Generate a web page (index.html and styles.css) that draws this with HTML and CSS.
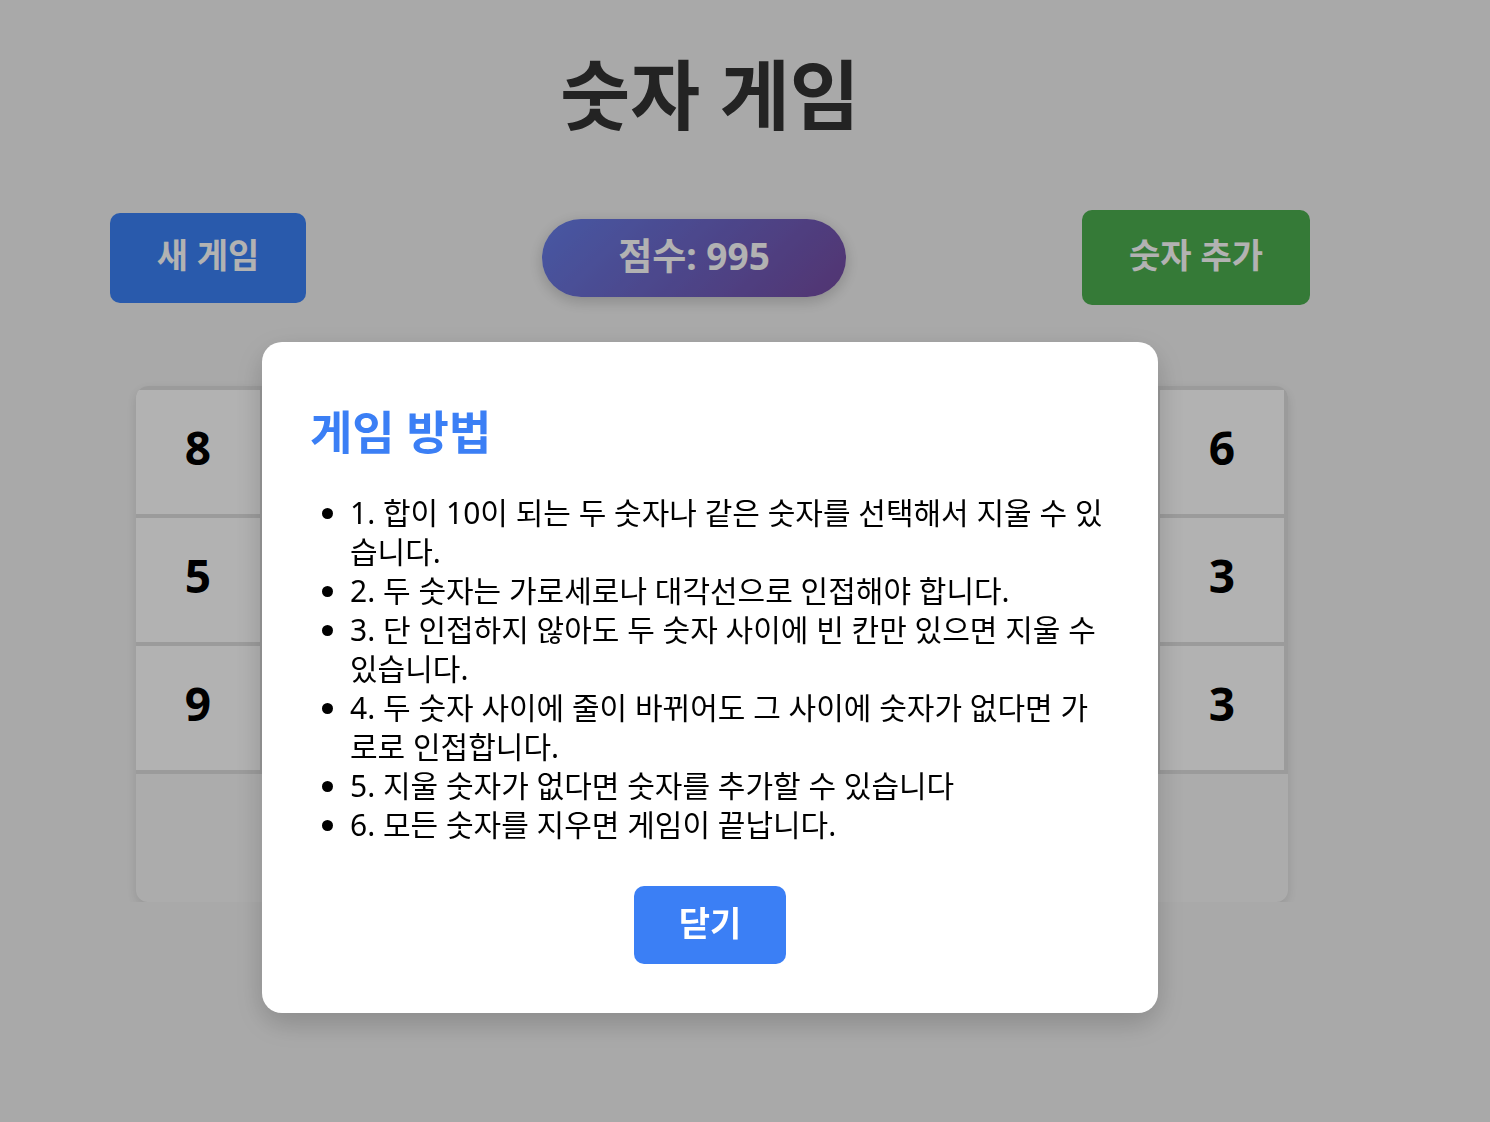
FILE: index.html
```html
<!DOCTYPE html>
<html lang="ko">
<head>
    <meta charset="UTF-8">
    <meta name="viewport" content="width=device-width, initial-scale=1.0">
    <title>숫자 게임</title>
    <link rel="stylesheet" href="styles.css">
</head>
<body>
    <div class="page">
        <h1 class="title">숫자 게임</h1>

        <div class="controls">
            <button class="btn btn-new">새 게임</button>
            <div class="score">점수: 995</div>
            <button class="btn btn-add">숫자 추가</button>
        </div>

        <div class="board">
            <div class="grid">
                <div class="cell">8</div><div class="cell">1</div><div class="cell">4</div><div class="cell">7</div><div class="cell">2</div><div class="cell">9</div><div class="cell">5</div><div class="cell">1</div><div class="cell">6</div>
                <div class="cell">5</div><div class="cell">2</div><div class="cell">7</div><div class="cell">3</div><div class="cell">8</div><div class="cell">4</div><div class="cell">6</div><div class="cell">9</div><div class="cell">3</div>
                <div class="cell">9</div><div class="cell">6</div><div class="cell">1</div><div class="cell">5</div><div class="cell">4</div><div class="cell">2</div><div class="cell">8</div><div class="cell">7</div><div class="cell">3</div>
            </div>
        </div>
    </div>

    <div class="overlay">
        <div class="modal">
            <h2>게임 방법</h2>
            <ul>
                <li>1. 합이 10이 되는 두 숫자나 같은 숫자를 선택해서 지울 수 있습니다.</li>
                <li>2. 두 숫자는 가로세로나 대각선으로 인접해야 합니다.</li>
                <li>3. 단 인접하지 않아도 두 숫자 사이에 빈 칸만 있으면 지울 수 있습니다.</li>
                <li>4. 두 숫자 사이에 줄이 바뀌어도 그 사이에 숫자가 없다면 가로로 인접합니다.</li>
                <li>5. 지울 숫자가 없다면 숫자를 추가할 수 있습니다</li>
                <li>6. 모든 숫자를 지우면 게임이 끝납니다.</li>
            </ul>
            <div class="modal-footer">
                <button class="btn btn-close">닫기</button>
            </div>
        </div>
    </div>
</body>
</html>
```

FILE: styles.css
```css
body {
    margin: 0;
    font-family: "Noto Sans", "Noto Sans CJK KR", sans-serif;
    background-color: #f3f3f3;
    color: #333;
}
.page {
    width: 1420px;
    padding-top: 50px;
}
.title {
    margin: 0;
    font-size: 76px;
    line-height: 90px;
    font-weight: bold;
    text-align: center;
    color: #333;
}
.controls {
    width: 1200px;
    margin: 70px auto 0;
    display: flex;
    justify-content: space-between;
    align-items: center;
}
.btn {
    font-family: "Noto Sans", "Noto Sans CJK KR", sans-serif;
    font-weight: bold;
    color: #fff;
    border: none;
    padding: 0 0 8px;
    cursor: pointer;
}
.btn-new {
    width: 196px;
    height: 90px;
    font-size: 34px;
    background-color: #3b82f6;
    border-radius: 10px;
}
.btn-add {
    width: 228px;
    height: 95px;
    font-size: 34px;
    background-color: #4caf50;
    border-radius: 10px;
}
.score {
    width: 304px;
    height: 78px;
    padding-bottom: 8px;
    box-sizing: border-box;
    border-radius: 39px;
    background: linear-gradient(135deg, #667eea 0%, #764ba2 100%);
    box-shadow: 0 4px 15px rgba(0, 0, 0, 0.2);
    color: #fff;
    font-size: 37px;
    font-weight: bold;
    display: flex;
    justify-content: center;
    align-items: center;
}
.board {
    width: 1152px;
    height: 516px;
    margin: 81px auto 0;
    position: relative;
    left: 2px;
    background-color: #f7f7f7;
    border-radius: 12px;
    box-shadow: 0 4px 12px rgba(0, 0, 0, 0.12);
    overflow: hidden;
}
.grid {
    display: grid;
    grid-template-columns: repeat(9, 124px);
    gap: 4px;
    padding: 4px 4px 4px 0;
    background-color: #dfdfdf;
}
.cell {
    height: 124px;
    padding-bottom: 10px;
    box-sizing: border-box;
    background-color: #fff;
    display: flex;
    justify-content: center;
    align-items: center;
    font-size: 46px;
    font-weight: bold;
    color: #000;
}
.overlay {
    position: fixed;
    top: 0;
    left: 0;
    right: 0;
    bottom: 0;
    padding-right: 70px;
    background-color: rgba(0, 0, 0, 0.3);
    display: flex;
    justify-content: center;
    align-items: flex-start;
}
.modal {
    width: 800px;
    margin-top: 342px;
    padding: 48px 48px 49px;
    background-color: #fff;
    border-radius: 20px;
    box-shadow: 0 10px 30px rgba(0, 0, 0, 0.2);
}
.modal h2 {
    margin: 8px 0 29px;
    font-size: 46px;
    line-height: 66px;
    color: #3b7ff5;
}
.modal ul {
    margin: 0;
    padding-left: 40px;
    font-size: 30px;
    line-height: 39px;
    color: #000;
}
.modal-footer {
    margin-top: 42px;
    text-align: center;
}
.btn-close {
    width: 152px;
    height: 78px;
    font-size: 34px;
    background-color: #3b7ff5;
    border-radius: 10px;
}
```
